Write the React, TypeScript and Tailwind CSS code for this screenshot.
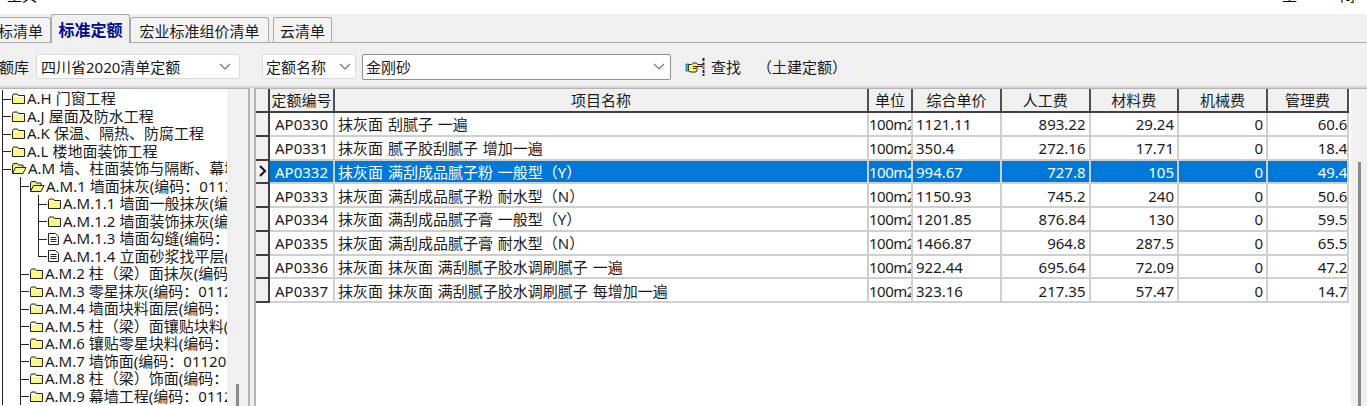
const cjk = { fontFamily: '"Noto Sans", "Noto Sans CJK SC", sans-serif' }

type Node = { code: string; name: string; level: number; open?: boolean; leaf?: boolean; guides: number[]; last?: boolean }

const treeRows: Node[] = [
  { code: 'A.H', name: '门窗工程', level: 0, guides: [2] },
  { code: 'A.J', name: '屋面及防水工程', level: 0, guides: [2] },
  { code: 'A.K', name: '保温、隔热、防腐工程', level: 0, guides: [2] },
  { code: 'A.L', name: '楼地面装饰工程', level: 0, guides: [2] },
  { code: 'A.M', name: '墙、柱面装饰与隔断、幕墙工程', level: 0, open: true, guides: [2] },
  { code: 'A.M.1', name: '墙面抹灰(编码：011201)', level: 1, open: true, guides: [2, 20] },
  { code: 'A.M.1.1', name: '墙面一般抹灰(编码：011201001)', level: 2, guides: [2, 20, 38] },
  { code: 'A.M.1.2', name: '墙面装饰抹灰(编码：011201002)', level: 2, guides: [2, 20, 38] },
  { code: 'A.M.1.3', name: '墙面勾缝(编码：011201003)', level: 2, leaf: true, guides: [2, 20, 38] },
  { code: 'A.M.1.4', name: '立面砂浆找平层(编码：011201004)', level: 2, leaf: true, last: true, guides: [2, 20, 38] },
  { code: 'A.M.2', name: '柱（梁）面抹灰(编码：011202)', level: 1, guides: [2, 20] },
  { code: 'A.M.3', name: '零星抹灰(编码：011203)', level: 1, guides: [2, 20] },
  { code: 'A.M.4', name: '墙面块料面层(编码：011204)', level: 1, guides: [2, 20] },
  { code: 'A.M.5', name: '柱（梁）面镶贴块料(编码：011205)', level: 1, guides: [2, 20] },
  { code: 'A.M.6', name: '镶贴零星块料(编码：011206)', level: 1, guides: [2, 20] },
  { code: 'A.M.7', name: '墙饰面(编码：011207)', level: 1, guides: [2, 20] },
  { code: 'A.M.8', name: '柱（梁）饰面(编码：011208)', level: 1, guides: [2, 20] },
  { code: 'A.M.9', name: '幕墙工程(编码：011209)', level: 1, guides: [2, 20] },
]

const quotaRows = [
  ['AP0330', '抹灰面 刮腻子 一遍', '100m2', '1121.11', '893.22', '29.24', '0', '60.65'],
  ['AP0331', '抹灰面 腻子胶刮腻子 增加一遍', '100m2', '350.4', '272.16', '17.71', '0', '18.43'],
  ['AP0332', '抹灰面 满刮成品腻子粉 一般型（Y）', '100m2', '994.67', '727.8', '105', '0', '49.43'],
  ['AP0333', '抹灰面 满刮成品腻子粉 耐水型（N）', '100m2', '1150.93', '745.2', '240', '0', '50.67'],
  ['AP0334', '抹灰面 满刮成品腻子膏 一般型（Y）', '100m2', '1201.85', '876.84', '130', '0', '59.54'],
  ['AP0335', '抹灰面 满刮成品腻子膏 耐水型（N）', '100m2', '1466.87', '964.8', '287.5', '0', '65.57'],
  ['AP0336', '抹灰面 抹灰面 满刮腻子胶水调刷腻子 一遍', '100m2', '922.44', '695.64', '72.09', '0', '47.23'],
  ['AP0337', '抹灰面 抹灰面 满刮腻子胶水调刷腻子 每增加一遍', '100m2', '323.16', '217.35', '57.47', '0', '14.76'],
]

const headers = [
  { label: '定额编号', w: 'w-[65px]' },
  { label: '项目名称', w: 'w-[534px]' },
  { label: '单位', w: 'w-[44px]' },
  { label: '综合单价', w: 'w-[89px]' },
  { label: '人工费', w: 'w-[88.5px]' },
  { label: '材料费', w: 'w-[88.5px]' },
  { label: '机械费', w: 'w-[89px]' },
  { label: '管理费', w: 'w-[81px]' },
]

function cellClass(c: number) {
  if (c === 0) return 'pl-[5px]'
  if (c === 1) return 'pl-[3px] [word-spacing:1px]'
  if (c === 2) return 'tracking-[-0.5px]'
  if (c === 3) return 'pl-[3px]'
  if (c === 7) return 'pl-[3px]'
  return 'justify-end pr-[3px]'
}

function Chevron() {
  return (
    <svg width="12" height="7" viewBox="0 0 12 7" fill="none" stroke="#777" strokeWidth="1.2" className="-mt-[2px]">
      <path d="M1 1l5 5 5-5" />
    </svg>
  )
}

function FolderIcon({ open }: { open?: boolean }) {
  if (open) {
    return (
      <svg width="16" height="13" viewBox="0 0 16 13" className="shrink-0">
        <path d="M1.500 11V3l1-1.500h4l1 1.500h4.500v2" fill="#f3ee7c" stroke="#222" />
        <path d="M1.500 11.500l3-6h10.500l-3 6z" fill="#fdf98e" stroke="#222" />
      </svg>
    )
  }
  return (
    <svg width="15" height="13" viewBox="0 0 15 13" className="shrink-0">
      <path d="M1.500 3.500l1-1.500h4l1 1.500h6v8h-12z" fill="#fbf782" stroke="#222" />
      <path d="M2 4.500h11" stroke="#fff" />
    </svg>
  )
}

function DocIcon() {
  return (
    <svg width="13" height="14" viewBox="0 0 13 14" fill="none" stroke="#222" className="shrink-0">
      <path d="M1.500 1.500h7l3 3v8h-10z" fill="#fff" />
      <path d="M3.500 5.500h6M3.500 7.500h6M3.500 9.500h6" />
    </svg>
  )
}

function TreeRow({ node }: { node: Node }) {
  const lineX = node.guides[node.guides.length - 1]
  const iconX = lineX + 9
  return (
    <div className="flex items-center h-[17.5px] whitespace-nowrap">
      <svg width={iconX} height="18" className="shrink-0" stroke="#222" fill="none">
        {node.guides.map((x) => (
          <path key={x} d={`M${x + 0.5} 0V${x === lineX && node.last ? 9 : 18}`} />
        ))}
        <path d={`M${lineX} 9.500H${iconX}`} />
      </svg>
      {node.leaf ? <DocIcon /> : <FolderIcon open={node.open} />}
      <span className={node.leaf ? 'ml-[3px]' : 'ml-[1px]'}>{node.code}</span>
      <span className="ml-[4px]">{node.name}</span>
    </div>
  )
}

function Tab({ label, active, className }: { label: string; active?: boolean; className: string }) {
  return (
    <div
      className={
        active
          ? `flex items-center h-[29px] -mb-px pt-[2px] bg-[#f0f0f0] border border-b-0 border-[#a9a9a9] rounded-t-[3px] font-bold text-[16px] text-[#000e8f] whitespace-nowrap ${className}`
          : `flex items-center h-[25px] pt-[2px] bg-[#f3f3f3] border border-b-0 border-[#a9a9a9] rounded-t-[3px] whitespace-nowrap ${className}`
      }
    >
      {label}
    </div>
  )
}

export default function App() {
  return (
    <div className="w-[1367px] h-[406px] overflow-hidden bg-[#f0f0f0] text-[15px] leading-none text-[#1a1a1a]" style={cjk}>
      {/* top window strip, title text is cut off by the crop */}
      <div className="flex justify-between h-[14px] bg-white overflow-hidden">
        <span className="ml-[7px] h-[3px] overflow-hidden flex items-end text-black">工具</span>
        <span className="mr-[12px] h-[3px] overflow-hidden flex items-end gap-[43px] text-black">
          <span>工</span>
          <span>闭</span>
        </span>
      </div>

      {/* tabs */}
      <div className="flex items-end h-[29px] border-b border-[#a9a9a9] -ml-[6px]">
        <Tab label="标清单" className="w-[57px] justify-end pr-[7px]" />
        <Tab active label="标准定额" className="w-[79px] justify-center" />
        <Tab label="宏业标准组价清单" className="w-[139px] justify-center" />
        <Tab label="云清单" className="w-[59px] ml-[4px] justify-center" />
      </div>

      {/* query bar */}
      <div className="flex items-center h-[45px] pt-[4px] border-b-2 border-[#d4d4d4] -ml-[1px] whitespace-nowrap">
        <span className="w-[37px] shrink-0 text-right pr-[10px] pt-[2px]">额库</span>
        <div className="flex items-center justify-between w-[204px] h-[25px] pt-[2px] bg-white border border-[#dcdcdc] rounded-[2px] pl-[4px] pr-[8px]">
          四川省2020清单定额
          <Chevron />
        </div>
        <div className="flex items-center justify-between w-[94px] h-[25px] pt-[2px] ml-[22px] bg-white border border-[#dcdcdc] rounded-[2px] pl-[3px] pr-[4px]">
          定额名称
          <Chevron />
        </div>
        <div className="flex items-center justify-between w-[309px] h-[26px] pt-[2px] ml-[6px] bg-white border border-[#8f8f8f] rounded-[2px] pl-[3px] pr-[5px]">
          金刚砂
          <Chevron />
        </div>
        <svg width="20" height="18" viewBox="0 0 20 18" className="ml-[14px] shrink-0">
          <path d="M3.500 6.500h3l2-1.500h3l1 1.500h4.500v2h-5v4l-1 1.500h-6l-1-1h-.5z" fill="#fdf66a" stroke="#222" />
          <path d="M1 6h2.500v7H1z" fill="#18d0e0" stroke="#222" strokeWidth="0.6" />
          <path d="M8 8.500h4M8 10.500h3" stroke="#222" />
          <path d="M18.500 0v3M18.500 4.500v3M18.500 12v3M18.500 16v2" stroke="#222" strokeWidth="2" />
          <path d="M18.500 8.500v2.500" stroke="#e01818" strokeWidth="2" />
        </svg>
        <span className="ml-[6px] pt-[2px]">查找</span>
        <span className="ml-[16px] pt-[2px]">（土建定额）</span>
      </div>

      <div className="flex h-[320px]">
        {/* tree */}
        <div className="flex w-[250px] h-full border-t border-r-2 border-[#b5b5b5] bg-white overflow-hidden shrink-0">
          <div className="w-[227px] pt-[1px] overflow-hidden shrink-0">
            {treeRows.map((node) => (
              <TreeRow key={node.code} node={node} />
            ))}
          </div>
          <div className="flex-1 bg-[#f0f0f0] flex justify-center items-end">
            <div className="w-[3px] h-[22px] mb-[2px] bg-[#8a8a8a]" />
          </div>
        </div>

        {/* quota grid */}
        <div className="flex-1 ml-[4px] bg-white border-l-2 border-t border-[#b5b5b5] flex min-w-0">
          <div className="w-[1093px] shrink-0">
            <div className="flex h-[24px] bg-[#f0f0f0] border-b-2 border-[#404040]">
              <div className="w-[14px] border-r-2 border-[#404040] shrink-0" />
              {headers.map((h) => (
                <div key={h.label} className={`${h.w} shrink-0 flex items-center justify-center pt-[1px] border-r-2 border-[#505050] overflow-hidden whitespace-nowrap`}>
                  {h.label}
                </div>
              ))}
            </div>
            {quotaRows.map((row, i) => {
              const selected = i === 2
              return (
                <div key={row[0]} className="flex h-[23.75px]">
                  <div className="w-[14px] shrink-0 bg-[#f0f0f0] border-r-2 border-b-2 border-[#404040] flex items-center justify-center">
                    {selected && (
                      <svg width="9" height="12" viewBox="0 0 9 12" fill="none" stroke="#111" strokeWidth="2">
                        <path d="M2 1l5 5-5 5" />
                      </svg>
                    )}
                  </div>
                  <div className={`flex flex-1 border-b-2 border-[#cfcfcf] ${selected ? 'bg-[#0078d7] text-white' : ''}`}>
                    {row.map((cell, c) => (
                      <div
                        key={c}
                        className={`${headers[c].w} shrink-0 flex items-center pt-[2px] overflow-hidden whitespace-nowrap border-r-2 border-[#cfcfcf] ${cellClass(c)}`}
                      >
                        {c === 7 ? <span className="w-[85px] shrink-0 text-right">{cell}</span> : cell}
                      </div>
                    ))}
                  </div>
                </div>
              )
            })}
          </div>
          <div className="flex-1 bg-[#f0f0f0] flex justify-center ml-[2px]">
            <div className="w-[3px] mt-[73px] h-[248px] bg-[#8a8a8a]" />
          </div>
        </div>
      </div>
    </div>
  )
}
